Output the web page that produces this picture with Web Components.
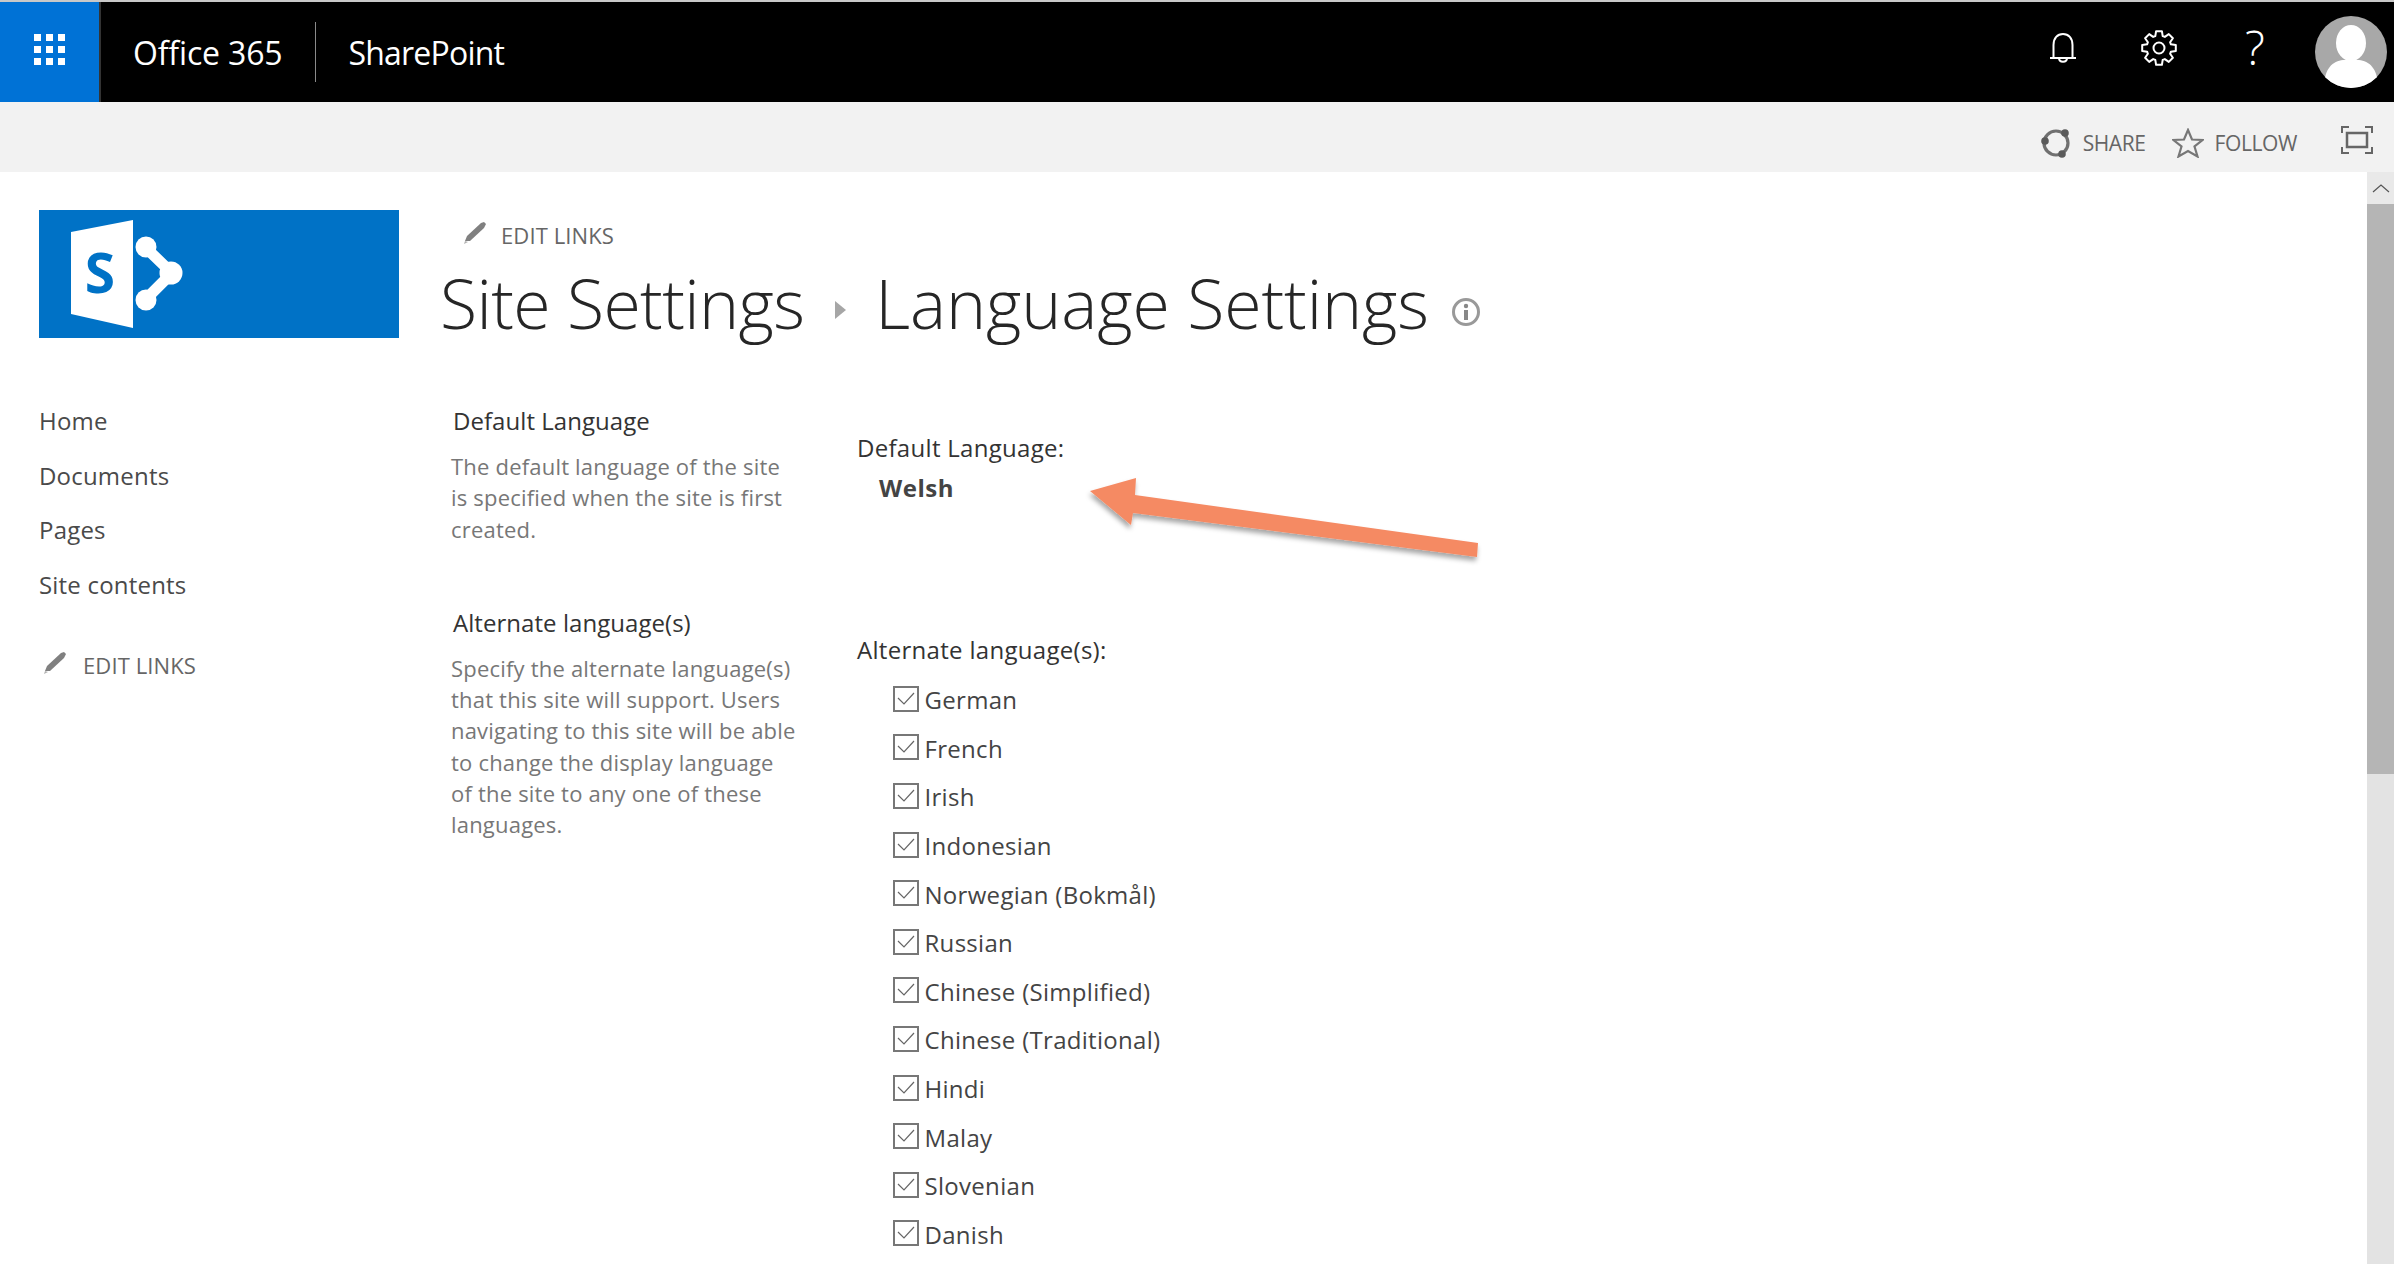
<!DOCTYPE html>
<html>
<head>
<meta charset="utf-8">
<title>Language Settings</title>
<style>
    html, body { margin: 0; height: 100%; overflow: hidden; background: #fff; }
    body { font-family: "Open Sans", "Noto Sans", sans-serif; }
</style>
</head>
<body>
<sp-page>
    <sp-suite-bar></sp-suite-bar>
    <sp-ribbon></sp-ribbon>
    <sp-left-rail>
        <sp-nav-item>Home</sp-nav-item>
        <sp-nav-item>Documents</sp-nav-item>
        <sp-nav-item>Pages</sp-nav-item>
        <sp-nav-item>Site contents</sp-nav-item>
    </sp-left-rail>
    <sp-main>
        <sp-section-text slot="left" heading="Default Language">The default language of the site<br>is specified when the site is first<br>created.</sp-section-text>
        <sp-section-text slot="left" heading="Alternate language(s)">Specify the alternate language(s)<br>that this site will support. Users<br>navigating to this site will be able<br>to change the display language<br>of the site to any one of these<br>languages.</sp-section-text>
        <sp-lang-check>German</sp-lang-check>
        <sp-lang-check>French</sp-lang-check>
        <sp-lang-check>Irish</sp-lang-check>
        <sp-lang-check>Indonesian</sp-lang-check>
        <sp-lang-check>Norwegian (Bokmål)</sp-lang-check>
        <sp-lang-check>Russian</sp-lang-check>
        <sp-lang-check>Chinese (Simplified)</sp-lang-check>
        <sp-lang-check>Chinese (Traditional)</sp-lang-check>
        <sp-lang-check>Hindi</sp-lang-check>
        <sp-lang-check>Malay</sp-lang-check>
        <sp-lang-check>Slovenian</sp-lang-check>
        <sp-lang-check>Danish</sp-lang-check>
    </sp-main>
    <sp-scrollbar></sp-scrollbar>
    <sp-callout-arrow></sp-callout-arrow>
</sp-page>

<script>
const PENCIL = `<svg width="26" height="24" viewBox="0 0 26 24"><path d="M3 20 L5 15 L19 2 L22 1 L24 3 L22 7 L8 20 Z" fill="#808080"/><path d="M2 23 L3 20 L6 21 Z" fill="#b0b0b0"/></svg>`;

// 齿轮外形,八个齿
function gearPath(cx, cy, outer, inner) {
    const pts = [];
    for (let i = 0; i < 8; i++) {
        const a = i * Math.PI / 4;
        [[-0.3, inner], [-0.17, outer], [0.17, outer], [0.3, inner]].forEach(([d, r]) => {
            pts.push((cx + r * Math.sin(a + d)).toFixed(1) + ' ' + (cy - r * Math.cos(a + d)).toFixed(1));
        });
    }
    return 'M' + pts.join(' L') + ' Z';
}

class SpPage extends HTMLElement {
    constructor() {
        super();
        this.attachShadow({ mode: 'open' });
        this.shadowRoot.innerHTML = `
            <style>
                :host {
                    display: grid;
                    position: relative;
                    height: 1264px;
                    overflow: hidden;
                    grid-template-columns: 441px 1fr 27px;
                    grid-template-rows: 102px 70px 1fr;
                }
            </style>
            <slot></slot>
        `;
    }
}

class SpSuiteBar extends HTMLElement {
    constructor() {
        super();
        this.attachShadow({ mode: 'open' });
        const dots = Array.from({ length: 9 }, () => '<i></i>').join('');
        this.shadowRoot.innerHTML = `
            <style>
                :host {
                    grid-column: 1 / -1;
                    display: flex;
                    align-items: center;
                    background: #000;
                    border-top: 2px solid #c8c8c8;
                    box-sizing: border-box;
                    color: #fff;
                    font-size: 32px;
                }
                .tile {
                    width: 99px;
                    height: 100%;
                    background: #0072d6;
                    border-right: 2px solid #333;
                    display: flex;
                    align-items: center;
                    justify-content: center;
                }
                .waffle { display: grid; grid-template-columns: repeat(3, 7px); gap: 5px; margin-bottom: 6px; }
                .waffle i { height: 7px; background: #fff; display: block; }
                .brand { margin-left: 32px; letter-spacing: -0.15px; }
                .sep { width: 1px; height: 60px; background: #8a8a8a; margin: 0 33px 0 32px; }
                .product { letter-spacing: -0.8px; }
                .icons { margin-left: auto; display: flex; align-items: center; }
                .bell { margin: 0 64px 9px 0; }
                .gear { margin: 0 66px 9px 0; }
                .help { font-size: 47px; font-weight: 300; width: 24px; text-align: center; margin: 0 48px 9px 0; line-height: 1; }
                .avatar { margin-right: 7px; display: block; }
                svg { display: block; }
            </style>
            <div class="tile"><div class="waffle">${dots}</div></div>
            <span class="brand">Office 365</span>
            <span class="sep"></span>
            <span class="product">SharePoint</span>
            <div class="icons">
                <svg class="bell" width="28" height="32" viewBox="0 0 28 32" fill="none" stroke="#fff" stroke-width="2">
                    <path d="M1 26 H27 M4.5 26 V13 C4.5 6 8.500 2 14 2 C19.500 2 23.500 6 23.500 13 V26"/>
                    <path d="M10 26 C10 31 18 31 18 26"/>
                </svg>
                <svg class="gear" width="36" height="36" viewBox="0 0 36 36" fill="none" stroke="#fff" stroke-width="2">
                    <path d="${gearPath(18, 18, 17, 12.500)}" stroke-linejoin="round"/>
                    <circle cx="18" cy="18" r="5.500"/>
                </svg>
                <span class="help">?</span>
                <svg class="avatar" width="72" height="72" viewBox="0 0 72 72">
                    <defs><clipPath id="c"><circle cx="36" cy="36" r="36"/></clipPath></defs>
                    <g clip-path="url(#c)">
                        <rect width="72" height="72" fill="#a8a8a8"/>
                        <ellipse cx="36" cy="27" rx="15" ry="18" fill="#fff"/>
                        <path d="M9 72 C9 52 18 45 28 44 H44 C54 45 63 52 63 72 Z" fill="#fff"/>
                    </g>
                </svg>
            </div>
        `;
    }
}

class SpRibbon extends HTMLElement {
    constructor() {
        super();
        this.attachShadow({ mode: 'open' });
        this.shadowRoot.innerHTML = `
            <style>
                :host {
                    grid-column: 1 / -1;
                    display: flex;
                    align-items: center;
                    justify-content: flex-end;
                    box-sizing: border-box;
                    padding-top: 12px;
                    background: #f2f2f2;
                    color: #666;
                    font-size: 21px;
                    letter-spacing: -0.4px;
                }
                svg { display: block; }
                .share-icon { margin-right: 12px; }
                .star { margin: 0 11px 0 26px; }
                .focus { margin: -6px 21px 0 44px; }
            </style>
            <svg class="share-icon" width="30" height="30" viewBox="0 0 30 30" fill="none">
                <circle cx="15" cy="15" r="12" stroke="#707070" stroke-width="3.200"/>
                <g fill="#5a5a5a"><circle cx="24" cy="5" r="3.800"/><circle cx="4" cy="13" r="3.800"/><circle cx="21" cy="26" r="3.800"/></g>
            </svg>
            <span>SHARE</span>
            <svg class="star" width="32" height="30" viewBox="0 0 32 30" fill="none" stroke="#777" stroke-width="2.200">
                <path d="M16 2 L20 11.500 L30.500 12 L22.500 18.500 L25.500 28.500 L16 23 L6.500 28.500 L9.500 18.500 L1.500 12 L12 11.500 Z"/>
            </svg>
            <span>FOLLOW</span>
            <svg class="focus" width="32" height="28" viewBox="0 0 32 28" fill="none" stroke="#666" stroke-width="2">
                <path d="M1 7 V1 H8 M24 1 H31 V7 M1 21 V27 H8 M24 27 H31 V21" />
                <rect x="6" y="7" width="20" height="14" stroke-width="2.500"/>
            </svg>
        `;
    }
}

class SpLeftRail extends HTMLElement {
    constructor() {
        super();
        this.attachShadow({ mode: 'open' });
        this.shadowRoot.innerHTML = `
            <style>
                :host {
                    display: block;
                    box-sizing: border-box;
                    padding: 38px 0 0 39px;
                }
                .logo { display: block; width: 360px; height: 128px; margin-bottom: 56px; }
                .edit {
                    display: flex;
                    align-items: center;
                    height: 52px;
                    margin-top: 28px;
                    font-size: 22px;
                    letter-spacing: 0.1px;
                    color: #666;
                }
                .edit span { padding-bottom: 2px; }
                .edit svg { margin: -6px 15px 0 3px; display: block; }
            </style>
            <svg class="logo" viewBox="0 0 360 128">
                <rect width="360" height="128" fill="#0072c6"/>
                <path d="M32 22 L94 10 V118 L32 104 Z" fill="#fff"/>
                <text x="61" y="83" text-anchor="middle" font-family="Open Sans" font-weight="700" font-size="55" fill="#0072c6">S</text>
                <path d="M106 37 L133 63 L106 90" fill="none" stroke="#fff" stroke-width="11"/>
                <g fill="#fff"><circle cx="107" cy="37" r="10.500"/><circle cx="132" cy="63" r="11.500"/><circle cx="107" cy="90" r="10.500"/></g>
            </svg>
            <slot></slot>
            <div class="edit">${PENCIL}<span>EDIT LINKS</span></div>
        `;
    }
}

class SpNavItem extends HTMLElement {
    constructor() {
        super();
        this.attachShadow({ mode: 'open' });
        this.shadowRoot.innerHTML = `
            <style>
                :host {
                    display: block;
                    line-height: 54.500px;
                    font-size: 24px;
                    letter-spacing: 0.2px;
                    color: #4a4a4a;
                }
            </style>
            <slot></slot>
        `;
    }
}

class SpMain extends HTMLElement {
    constructor() {
        super();
        this.attachShadow({ mode: 'open' });
        this.shadowRoot.innerHTML = `
            <style>
                :host { display: block; color: #333; }
                .edit {
                    display: flex;
                    align-items: center;
                    height: 48px;
                    margin: 40px 0 0 21px;
                    font-size: 22px;
                    letter-spacing: 0.1px;
                    color: #666;
                }
                .edit span { padding-bottom: 2px; }
                .edit svg { margin: -6px 13px 0 0; display: block; }
                .title {
                    display: flex;
                    align-items: center;
                    height: 84px;
                    margin-left: -1px;
                    font-size: 68px;
                    font-weight: 300;
                    color: #262626;
                    white-space: nowrap;
                }
                .site { letter-spacing: -0.65px; }
                .lang { letter-spacing: -0.1px; }
                .crumb { width: 0; height: 0; border-left: 11px solid #a6a6a6; border-top: 9px solid transparent; border-bottom: 9px solid transparent; margin: 16px 29px 0 31px; }
                .info { display: block; margin: 19px 0 0 22px; }
                .cols { display: flex; margin-top: 61px; }
                .left { width: 406px; margin-left: 10px; flex: none; }
                .right { padding-top: 27px; font-size: 24px; letter-spacing: 0.3px; line-height: 32px; }
                .welsh { font-weight: 700; color: #444; margin: 8px 0 130px 22px; letter-spacing: 0.5px; }
                .checks { margin: 10px 0 0 36px; }
            </style>
            <div class="edit">${PENCIL}<span>EDIT LINKS</span></div>
            <div class="title">
                <span class="site">Site Settings</span>
                <i class="crumb"></i>
                <span class="lang">Language Settings</span>
                <svg class="info" width="30" height="30" viewBox="0 0 30 30">
                    <circle cx="15" cy="15" r="12.500" fill="none" stroke="#999" stroke-width="3"/>
                    <circle cx="15" cy="9" r="2.200" fill="#888"/>
                    <rect x="13" y="13" width="4" height="10" fill="#888"/>
                </svg>
            </div>
            <div class="cols">
                <div class="left"><slot name="left"></slot></div>
                <div class="right">
                    <div>Default Language:</div>
                    <div class="welsh">Welsh</div>
                    <div>Alternate language(s):</div>
                    <div class="checks"><slot></slot></div>
                </div>
            </div>
        `;
    }
}

class SpSectionText extends HTMLElement {
    constructor() {
        super();
        this.attachShadow({ mode: 'open' });
        this.shadowRoot.innerHTML = `
            <style>
                :host { display: block; margin-bottom: 62px; }
                h3 {
                    margin: 0 0 14px 2px;
                    font-weight: 400;
                    font-size: 24px;
                    line-height: 32px;
                    letter-spacing: 0.05px;
                    color: #333;
                }
                p {
                    margin: 0;
                    font-size: 22px;
                    line-height: 31.300px;
                    letter-spacing: 0.2px;
                    color: #777;
                    white-space: nowrap;
                }
            </style>
            <h3>${this.getAttribute('heading')}</h3>
            <p><slot></slot></p>
        `;
    }
}

class SpLangCheck extends HTMLElement {
    constructor() {
        super();
        this.attachShadow({ mode: 'open' });
        this.shadowRoot.innerHTML = `
            <style>
                :host {
                    display: flex;
                    align-items: center;
                    height: 48.600px;
                    gap: 5.500px;
                    color: #444;
                    white-space: nowrap;
                }
                svg { display: block; flex: none; margin-top: -3px; }
            </style>
            <svg width="26" height="26" viewBox="0 0 26 26" fill="none">
                <rect x="1" y="1" width="24" height="24" stroke="#777" stroke-width="2"/>
                <path d="M5 12 L11 18 L21 7" stroke="#666" stroke-width="1.200"/>
            </svg>
            <span><slot></slot></span>
        `;
    }
}

class SpScrollbar extends HTMLElement {
    constructor() {
        super();
        this.attachShadow({ mode: 'open' });
        this.shadowRoot.innerHTML = `
            <style>
                :host { display: flex; flex-direction: column; background: #e3e3e3; }
                .up { height: 32px; display: flex; align-items: center; justify-content: center; background: #e9e9e9; }
                .thumb { height: 570px; background: #b5b5b5; }
                svg { display: block; }
            </style>
            <div class="up">
                <svg width="18" height="10" viewBox="0 0 18 10" fill="none" stroke="#555" stroke-width="1.200"><path d="M1 9 L9 2 L17 9"/></svg>
            </div>
            <div class="thumb"></div>
        `;
    }
}

class SpCalloutArrow extends HTMLElement {
    constructor() {
        super();
        this.attachShadow({ mode: 'open' });
        this.shadowRoot.innerHTML = `
            <style>
                :host { position: absolute; left: 1080px; top: 465px; display: block; }
                svg { display: block; overflow: visible; }
            </style>
            <svg width="410" height="105" viewBox="1080 465 410 105">
                <defs><filter id="s" x="-5%" y="-10%" width="110%" height="130%"><feDropShadow dx="-1" dy="4" stdDeviation="2.500" flood-color="#000" flood-opacity=".35"/></filter></defs>
                <path d="M1090 491 L1136 478 L1135 495 L1478 543 L1477 557 L1133 513 L1131 525 Z" fill="#f58a64" filter="url(#s)"/>
            </svg>
        `;
    }
}

customElements.define('sp-page', SpPage);
customElements.define('sp-suite-bar', SpSuiteBar);
customElements.define('sp-ribbon', SpRibbon);
customElements.define('sp-left-rail', SpLeftRail);
customElements.define('sp-nav-item', SpNavItem);
customElements.define('sp-main', SpMain);
customElements.define('sp-section-text', SpSectionText);
customElements.define('sp-lang-check', SpLangCheck);
customElements.define('sp-scrollbar', SpScrollbar);
customElements.define('sp-callout-arrow', SpCalloutArrow);
</script>
</body>
</html>
